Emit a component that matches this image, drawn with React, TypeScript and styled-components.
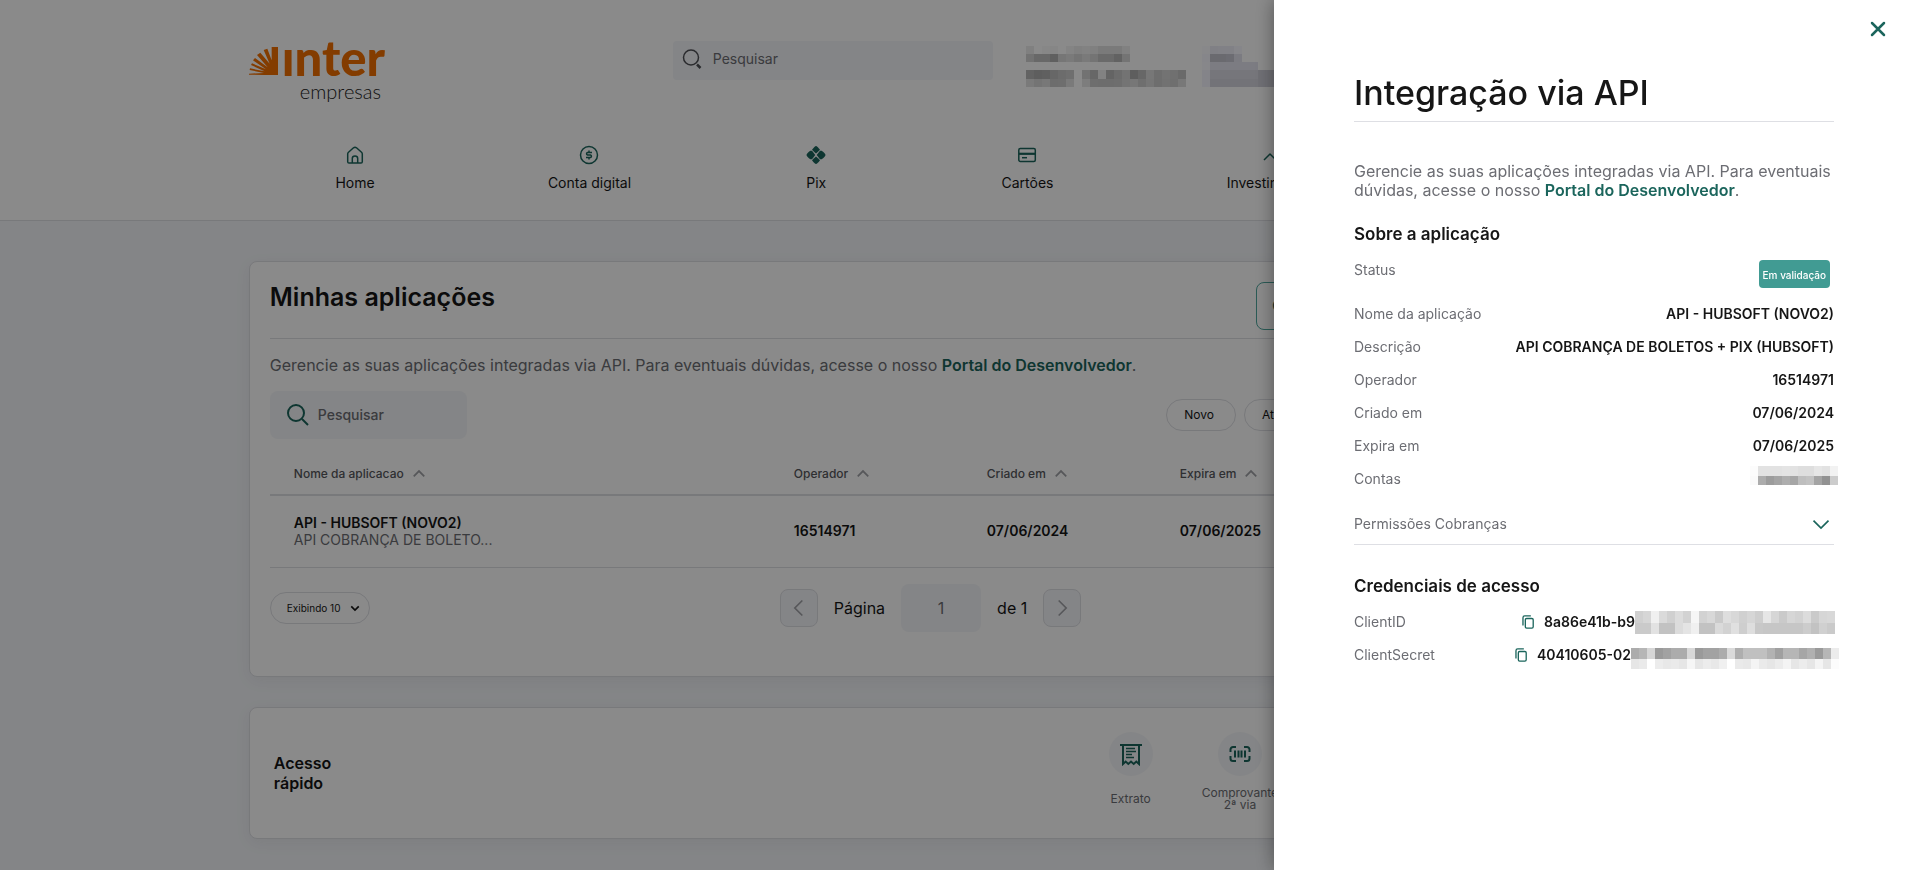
import React from "react";
import styled, { createGlobalStyle } from "styled-components";

const colors = {
  green: "#1b655c",
  text: "#161616",
  muted: "#6c6d73",
  line: "#dedfe4",
  field: "#f4f6f9",
};

const GlobalStyle = createGlobalStyle`
  * { box-sizing: border-box; }
  body {
    margin: 0;
    background: #f4f6f9;
    color: ${colors.text};
    font-family: Inter, "Liberation Sans", sans-serif;
    font-size: 14px;
    line-height: 20px;
    overflow: hidden;
  }
  button, input, select { font: inherit; color: inherit; }
  h1, h2, p, dl, dd { margin: 0; }
  a { text-decoration: none; }
`;

/* ---------- page shell ---------- */

const Page = styled.div`
  height: 100vh;
  overflow: hidden;
`;

const Container = styled.div`
  width: 74%;
  margin: 0 auto;
`;

const Header = styled.header`
  background: #fff;
  border-bottom: 1px solid ${colors.line};
  padding: 41px 0 27px;
`;

const TopRow = styled.div`
  display: flex;
  align-items: flex-start;
  height: 60px;
`;

const Brand = styled.a`
  display: grid;
  grid-template-columns: 29px auto;
  column-gap: 4px;
  width: 424px;
  justify-content: start;
  color: #f37000;
`;

const BrandMark = styled.svg`
  margin-top: 6px;
`;

const BrandName = styled.span`
  font-family: Lato, sans-serif;
  font-weight: 900;
  font-size: 49px;
  line-height: 32px;
`;

const BrandSub = styled.span`
  grid-column: 2;
  padding-left: 18px;
  font-family: Lato, sans-serif;
  font-weight: 300;
  font-size: 20px;
  line-height: 32px;
  color: #1a1a1a;
`;

const SearchBox = styled.label<{ $size: "top" | "table" }>`
  display: flex;
  align-items: center;
  background: ${colors.field};
  color: ${(p) => (p.$size === "top" ? "#4f5056" : colors.green)};
  border-radius: ${(p) => (p.$size === "top" ? 4 : 8)}px;
  width: ${(p) => (p.$size === "top" ? 320 : 197)}px;
  height: ${(p) => (p.$size === "top" ? 39 : 48)}px;
  padding: ${(p) => (p.$size === "top" ? "0 8px 4px" : "0 8px 0 16px")};
  gap: ${(p) => (p.$size === "top" ? 10 : 8)}px;

  svg { flex: none; }

  input {
    width: 100%;
    min-width: 0;
    border: 0;
    padding: 0;
    background: none;
    outline: none;
    font-weight: ${(p) => (p.$size === "top" ? 400 : 500)};
  }
  input::placeholder { color: ${colors.muted}; opacity: 1; }
`;

const Account = styled.div`
  display: flex;
  gap: 16px;
  margin: 5px 0 0 33px;
`;

const Nav = styled.nav`
  display: flex;
  justify-content: space-around;
  margin-top: 42px;
  padding-right: 260px;
`;

const NavLink = styled.a`
  display: flex;
  flex-direction: column;
  align-items: center;
  gap: 6px;
  color: ${colors.text};

  svg { color: ${colors.green}; }
`;

/* ---------- cards ---------- */

const Card = styled.section`
  background: #fff;
  border: 1px solid ${colors.line};
  border-radius: 8px;
  box-shadow: 0 4px 16px rgba(30, 40, 60, 0.06);
`;

const AppsCard = styled(Card)`
  margin-top: 40px;
  padding: 20px 20px 44px;
`;

const CardHead = styled.div`
  display: flex;
  justify-content: space-between;
  height: 57px;
  border-bottom: 1px solid ${colors.line};
`;

const CardTitle = styled.h2`
  font-size: 25px;
  line-height: 30px;
  font-weight: 600;
`;

const OutlineButton = styled.button`
  width: 388px;
  height: 48px;
  padding: 0 15px;
  text-align: left;
  border: 1px solid #4fa79e;
  border-radius: 8px;
  background: #fff;
  color: ${colors.green};
  font-weight: 600;
`;

const Intro = styled.p`
  margin-top: 16px;
  font-size: 16px;
  color: ${colors.muted};
`;

const PortalLink = styled.a`
  color: ${colors.green};
  font-weight: 600;
`;

const Filters = styled.div`
  display: flex;
  align-items: center;
  justify-content: space-between;
  margin-top: 16px;
`;

const Pills = styled.div`
  display: flex;
  gap: 8px;
  width: 478px;
`;

const Pill = styled.button`
  height: 32px;
  padding: 0 21px 0 17px;
  border: 1px solid ${colors.line};
  border-radius: 16px;
  background: #fff;
  font-size: 12px;
`;

const Table = styled.table`
  width: 100%;
  margin-top: 14px;
  border-collapse: collapse;
  table-layout: fixed;

  th, td {
    width: 193px;
    padding: 0;
    text-align: left;
  }
  th:first-child { width: 524px; }
  th:last-child { width: auto; }
  th:first-child, td:first-child { padding-left: 24px; }
  th {
    height: 42px;
    border-bottom: 2px solid ${colors.line};
    color: #56575c;
    font-size: 12px;
    font-weight: 500;
  }
  td {
    height: 72px;
    border-bottom: 1px solid ${colors.line};
    font-weight: 600;
  }
`;

const SortLabel = styled.span`
  display: flex;
  align-items: center;
  gap: 8px;

  svg { color: #a0a1a6; }
`;

const AppName = styled.div`
  line-height: 17px;
`;

const AppNote = styled.div`
  line-height: 17px;
  font-weight: 400;
  color: ${colors.muted};
`;

const TableFoot = styled.div`
  display: grid;
  grid-template-columns: 100px 1fr 153px;
  align-items: center;
  margin-top: 16px;
`;

const PageSize = styled.div`
  display: grid;
  align-items: center;

  select, svg { grid-area: 1 / 1; }
  select {
    appearance: none;
    height: 32px;
    padding: 0 16px;
    border: 1px solid ${colors.line};
    border-radius: 16px;
    background: #fff;
    font-size: 10px;
  }
  svg {
    justify-self: end;
    margin-right: 10px;
    pointer-events: none;
  }
`;

const Pager = styled.div`
  display: flex;
  align-items: center;
  justify-content: center;
  gap: 16px;
  font-size: 16px;

  input {
    width: 80px;
    height: 48px;
    border: 0;
    border-radius: 8px;
    background: ${colors.field};
    color: ${colors.muted};
    text-align: center;
  }
`;

const PagerButton = styled.button`
  display: grid;
  place-items: center;
  width: 38px;
  height: 38px;
  padding: 0;
  border: 1px solid ${colors.line};
  border-radius: 8px;
  background: ${colors.field};
  color: #a0a1a6;
`;

const QuickCard = styled(Card)`
  display: flex;
  align-items: center;
  justify-content: space-between;
  margin-top: 30px;
  padding: 24px 370px 27px 24px;
`;

const QuickTitle = styled.h2`
  width: 80px;
  padding-top: 4px;
  font-size: 16px;
  line-height: 20px;
  font-weight: 600;
`;

const QuickList = styled.div`
  display: flex;
`;

const QuickLink = styled.a`
  display: flex;
  flex-direction: column;
  align-items: center;
  width: 109px;
  color: ${colors.muted};
  font-size: 12px;
  line-height: 12px;
  text-align: center;
`;

const QuickIcon = styled.span`
  display: grid;
  place-items: center;
  width: 44px;
  height: 44px;
  border-radius: 50%;
  background: ${colors.field};
  color: ${colors.green};
`;

const QuickLabel = styled.span`
  display: grid;
  place-items: center;
  width: 76px;
  height: 24px;
  margin-top: 11px;
`;

/* ---------- drawer ---------- */

const Backdrop = styled.div`
  position: fixed;
  inset: 0;
  background: rgba(0, 0, 0, 0.46);
`;

const Drawer = styled.aside`
  position: fixed;
  inset: 0 0 0 auto;
  width: 640px;
  padding: 73px 80px 0;
  background: #fff;
  box-shadow: 0 0 18px rgba(0, 0, 0, 0.4);
`;

const CloseButton = styled.button`
  position: absolute;
  top: 17px;
  right: 24px;
  display: grid;
  place-items: center;
  width: 24px;
  height: 24px;
  padding: 0;
  border: 0;
  background: none;
  color: ${colors.green};
`;

const DrawerTitle = styled.h1`
  padding-bottom: 8px;
  border-bottom: 1px solid ${colors.line};
  font-size: 34px;
  line-height: 40px;
  font-weight: 500;
`;

const DrawerIntro = styled.p`
  margin-top: 40px;
  font-size: 16px;
  line-height: 19px;
  color: ${colors.muted};
`;

const SectionTitle = styled.h2`
  font-size: 17px;
  line-height: 20px;
  font-weight: 600;
`;

const Details = styled.dl`
  display: flex;
  flex-direction: column;
  gap: 13px;
`;

const Detail = styled.div<{ $tall?: boolean }>`
  display: flex;
  justify-content: space-between;
  height: ${(p) => (p.$tall ? 31 : 20)}px;

  dt { color: ${colors.muted}; }
  dd {
    display: flex;
    align-items: center;
    font-weight: 600;
  }
`;

const Badge = styled.span`
  align-self: flex-start;
  margin-right: 4px;
  padding: 5px 4px 3px;
  border-radius: 4px;
  background: #419b93;
  color: #fff;
  font-size: 10px;
  font-weight: 500;
`;

const Permissions = styled.button`
  display: flex;
  align-items: center;
  justify-content: space-between;
  width: 100%;
  height: 41px;
  margin-top: 15px;
  padding: 0 3px 0 0;
  border: 0;
  border-bottom: 1px solid ${colors.line};
  background: none;
  color: ${colors.muted};

  svg { color: ${colors.green}; }
`;

const CopyButton = styled.button`
  display: grid;
  place-items: center;
  width: 16px;
  height: 16px;
  margin-right: 8px;
  padding: 0;
  border: 0;
  background: none;
  color: ${colors.green};
`;

const Mosaic = styled.svg<{ $overhang?: number }>`
  flex: none;
  display: block;
  margin-right: ${(p) => -(p.$overhang ?? 0)}px;
`;

/* ---------- redacted values ---------- */

type Row = { height: number; shades: number[] };

// Each shade is a grey level (0–255); 255 leaves the cell empty.
function Redacted({ rows, overhang, tint = 0 }: { rows: Row[]; overhang?: number; tint?: number }) {
  const cell = 8;
  const width = Math.max(...rows.map((r) => r.shades.length)) * cell;
  const height = rows.reduce((sum, r) => sum + r.height, 0);
  let y = 0;
  return (
    <Mosaic width={width} height={height} shapeRendering="crispEdges" $overhang={overhang} aria-hidden>
      {rows.map((row, i) => {
        const top = y;
        y += row.height;
        return row.shades.map((s, j) =>
          s === 255 ? null : (
            <rect
              key={`${i}-${j}`}
              x={j * cell}
              y={top}
              width={cell}
              height={row.height}
              fill={`rgb(${s},${s},${Math.min(255, s + tint)})`}
            />
          )
        );
      })}
    </Mosaic>
  );
}

const accountRows: Row[] = [
  { height: 8, shades: [236, 255, 250, 248, 255, 244, 236, 240, 236, 226, 226, 226, 238] },
  { height: 8, shades: [210, 192, 192, 178, 218, 226, 214, 226, 214, 196, 196, 182, 214] },
  { height: 8, shades: [] },
  { height: 9, shades: [184, 174, 178, 190, 200, 206, 255, 210, 190, 240, 186, 200, 212, 174, 190, 220, 204, 212, 208, 196] },
  { height: 8, shades: [226, 214, 222, 202, 204, 226, 255, 232, 204, 202, 202, 204, 214, 220, 206, 218, 204, 210, 206, 222] },
];
const agencyRows: Row[] = [
  { height: 8, shades: [252, 236, 238, 238, 248] },
  { height: 8, shades: [248, 196, 196, 200, 228] },
  { height: 8, shades: [250, 230, 230, 230, 230, 230, 230, 255, 255] },
  { height: 9, shades: [244, 218, 218, 218, 218, 218, 218, 206, 206] },
  { height: 8, shades: [244, 212, 212, 212, 212, 212, 212, 206, 206] },
];
const contasRows: Row[] = [
  { height: 10, shades: [252, 226, 226, 226, 228, 226, 222, 222, 230, 226, 242] },
  { height: 9, shades: [250, 172, 156, 164, 174, 166, 190, 194, 164, 146, 204] },
  { height: 7, shades: [] },
];
const clientIdRows: Row[] = [
  { height: 12, shades: [208, 214, 240, 218, 208, 220, 210, 246, 210, 216, 202, 222, 216, 208, 214, 206, 230, 214, 202, 214, 210, 220, 202, 214, 216] },
  { height: 11, shades: [202, 202, 226, 194, 194, 220, 228, 240, 194, 194, 218, 210, 224, 206, 222, 200, 198, 198, 198, 198, 198, 204, 194, 208, 202] },
];
const secretRows: Row[] = [
  { height: 6, shades: [] },
  { height: 11, shades: [172, 182, 214, 154, 162, 172, 172, 216, 154, 162, 162, 172, 218, 174, 192, 192, 192, 178, 160, 182, 182, 166, 176, 154, 182, 236] },
  { height: 10, shades: [230, 234, 255, 236, 232, 234, 230, 246, 230, 236, 232, 240, 255, 234, 232, 244, 234, 230, 236, 244, 230, 236, 230, 244, 230, 252] },
];

/* ---------- icons ---------- */

const Magnifier = ({ size }: { size: number }) => (
  <svg width={size} height={size} viewBox="0 0 24 24" fill="none" stroke="currentColor" strokeWidth="2">
    <circle cx="10" cy="10" r="8" />
    <path d="M16 16l6 6" />
  </svg>
);

const SplitMagnifier = () => (
  <svg width="22" height="22" viewBox="0 0 22 22" fill="none" stroke="currentColor" strokeWidth="1.5">
    <circle cx="10" cy="9.5" r="7.5" />
    <path d="M16 16.5l3.500 3.500" strokeWidth="2.500" />
  </svg>
);

const Chevron = ({ dir, size, weight = 2 }: { dir: "up" | "down" | "left" | "right"; size: number; weight?: number }) => {
  const d = { up: "M3 16l9-9 9 9", down: "M3 8l9 9 9-9", left: "M16 3l-9 9 9 9", right: "M8 3l9 9-9 9" }[dir];
  return (
    <svg width={size} height={size} viewBox="0 0 24 24" fill="none" stroke="currentColor" strokeWidth={weight}>
      <path d={d} />
    </svg>
  );
};

const NavSvg = ({ children }: { children: React.ReactNode }) => (
  <svg width="24" height="24" viewBox="0 0 24 24" fill="none" stroke="currentColor" strokeWidth="1.5" strokeLinejoin="round">
    {children}
  </svg>
);

const HomeIcon = () => (
  <NavSvg>
    <path d="M6 20Q4.700 20 4.700 18.700V11Q4.700 10 5.500 9.200L10.500 4.800Q12 3.600 13.500 4.800L18.500 9.200Q19.300 10 19.300 11V18.700Q19.300 20 18 20Z" />
    <path d="M9.300 20v-4.500q0-2.500 2.700-2.500t2.700 2.500v4.500" />
  </NavSvg>
);

const DollarIcon = () => (
  <NavSvg>
    <circle cx="12" cy="12" r="8.500" />
    <path d="M15 9.500H10.500a1.300 1.300 0 0 0 0 2.500h3a1.300 1.300 0 0 1 0 2.500H9M12 7.500v2M12 14.500v2" />
  </NavSvg>
);

const PixIcon = () => (
  <NavSvg>
    <g fill="currentColor" stroke="none">
      <path d="M12 3q1.200 0 4 3.800Q14 9 12 10.500 10 9 8 6.800 10.800 3 12 3Z" />
      <path d="M12 21q1.200 0 4-3.800Q14 15 12 13.500 10 15 8 17.200 10.800 21 12 21Z" />
      <path d="M2.500 12q0-1.400 3.800-4.200h1.700L11.300 12 8 16.200H6.300Q2.500 13.400 2.500 12Z" />
      <path d="M21.500 12q0-1.400-3.800-4.200h-1.700L12.700 12l3.300 4.200h1.700Q21.500 13.400 21.500 12Z" />
    </g>
  </NavSvg>
);

const CardIcon = () => (
  <NavSvg>
    <rect x="3.800" y="5.500" width="16.500" height="13" rx="1.500" />
    <path d="M4 10.800h16" strokeWidth="2.200" />
    <path d="M7 14.700h5" />
  </NavSvg>
);

const TrendIcon = () => (
  <NavSvg>
    <path d="M3 17l6-6 4 4 8-9" />
  </NavSvg>
);

const ReceiptIcon = () => (
  <svg width="24" height="24" viewBox="0 0 24 24" fill="none" stroke="currentColor" strokeWidth="2">
    <path d="M1 3h22M4 3v19l2.700-2.500L9.300 22 12 19.500l2.700 2.500 2.600-2.500L20 22V3" />
    <path d="M7 6.500h9M7 9.500h10M7 12.500h6M7 15.500h8" strokeWidth="1.700" />
  </svg>
);

const BarcodeIcon = () => (
  <svg width="24" height="24" viewBox="0 0 24 24" fill="none" stroke="currentColor" strokeWidth="2">
    <path d="M8 5H5a2.500 2.500 0 0 0-2.500 2.500V10M16 5h3a2.500 2.500 0 0 1 2.500 2.500V10M8 19H5a2.500 2.500 0 0 1-2.500-2.500V14M16 19h3a2.500 2.500 0 0 0 2.500-2.500V14" />
    <path d="M7 8.500v7M10.500 8.500v7M13.500 8.500v7M17 8.500v7" />
  </svg>
);

const CopyIcon = () => (
  <svg width="12" height="14" viewBox="0 0 13.500 16" fill="none" stroke="currentColor" strokeWidth="1.500">
    <rect x="3.700" y="4" width="9" height="11" rx="1.500" />
    <path d="M1 12V3Q1 1 3 1h7" />
  </svg>
);

const Sunburst = () => (
  <BrandMark width="29" height="28" viewBox="0 0 87 84" fill="currentColor" aria-hidden>
    <path d="M68 0H87V84H45L0 83V80L45 78 2 69 3 64 47 73 6 54 9 49 51 67 12 40 18 33 56 61 24 24 34 17 62 50 44 9 55 5 68 40Z" />
  </BrandMark>
);

/* ---------- page ---------- */

const navItems = [
  { label: "Home", icon: <HomeIcon /> },
  { label: "Conta digital", icon: <DollarIcon /> },
  { label: "Pix", icon: <PixIcon /> },
  { label: "Cartões", icon: <CardIcon /> },
  { label: "Investimentos", icon: <TrendIcon /> },
];

const quickItems = [
  { label: "Extrato", icon: <ReceiptIcon /> },
  { label: "Comprovante 2ª via", icon: <BarcodeIcon /> },
];

const details = [
  ["Nome da aplicação", "API - HUBSOFT (NOVO2)"],
  ["Descrição", "API COBRANÇA DE BOLETOS + PIX (HUBSOFT)"],
  ["Operador", "16514971"],
  ["Criado em", "07/06/2024"],
  ["Expira em", "07/06/2025"],
];

const SectionBlock = styled.div<{ $top: number }>`
  display: flex;
  flex-direction: column;
  margin-top: ${(p) => p.$top}px;
  gap: 16px;
`;

const columns = ["Nome da aplicacao", "Operador", "Criado em", "Expira em"];

export default function App() {
  return (
    <Page>
      <GlobalStyle />
      <Header>
        <Container>
          <TopRow>
            <Brand href="#" aria-label="inter empresas">
              <Sunburst />
              <BrandName>ınter</BrandName>
              <BrandSub>empresas</BrandSub>
            </Brand>
            <SearchBox $size="top">
              <SplitMagnifier />
              <input type="search" placeholder="Pesquisar" aria-label="Pesquisar" />
            </SearchBox>
            <Account>
              <Redacted rows={accountRows} />
              <Redacted rows={agencyRows} tint={10} />
            </Account>
          </TopRow>
          <Nav>
            {navItems.map((item) => (
              <NavLink key={item.label} href="#">
                {item.icon}
                {item.label}
              </NavLink>
            ))}
          </Nav>
        </Container>
      </Header>

      <Container as="main">
        <AppsCard>
          <CardHead>
            <CardTitle>Minhas aplicações</CardTitle>
            <OutlineButton>Criar</OutlineButton>
          </CardHead>
          <Intro>
            Gerencie as suas aplicações integradas via API. Para eventuais dúvidas, acesse o nosso{" "}
            <PortalLink href="#">Portal do Desenvolvedor</PortalLink>.
          </Intro>
          <Filters>
            <SearchBox $size="table">
              <Magnifier size={24} />
              <input type="search" placeholder="Pesquisar" aria-label="Pesquisar aplicação" />
            </SearchBox>
            <Pills>
              <Pill>Novo</Pill>
              <Pill>Ativo</Pill>
            </Pills>
          </Filters>
          <Table>
            <thead>
              <tr>
                {columns.map((name) => (
                  <th key={name} scope="col">
                    <SortLabel>
                      {name}
                      <Chevron dir="up" size={14} weight={3} />
                    </SortLabel>
                  </th>
                ))}
              </tr>
            </thead>
            <tbody>
              <tr>
                <td>
                  <AppName>API - HUBSOFT (NOVO2)</AppName>
                  <AppNote>API COBRANÇA DE BOLETO...</AppNote>
                </td>
                <td>16514971</td>
                <td>07/06/2024</td>
                <td>07/06/2025</td>
              </tr>
            </tbody>
          </Table>
          <TableFoot>
            <PageSize>
              <select aria-label="Itens por página">
                <option>Exibindo 10</option>
              </select>
              <Chevron dir="down" size={10} weight={4} />
            </PageSize>
            <Pager>
              <PagerButton aria-label="Página anterior">
                <Chevron dir="left" size={20} />
              </PagerButton>
              <label htmlFor="page">Página</label>
              <input id="page" defaultValue="1" />
              <span>de 1</span>
              <PagerButton aria-label="Próxima página">
                <Chevron dir="right" size={20} />
              </PagerButton>
            </Pager>
          </TableFoot>
        </AppsCard>

        <QuickCard>
          <QuickTitle>Acesso rápido</QuickTitle>
          <QuickList>
            {quickItems.map((item) => (
              <QuickLink key={item.label} href="#">
                <QuickIcon>{item.icon}</QuickIcon>
                <QuickLabel>{item.label}</QuickLabel>
              </QuickLink>
            ))}
          </QuickList>
        </QuickCard>
      </Container>

      <Backdrop />
      <Drawer role="dialog" aria-labelledby="drawer-title">
        <CloseButton aria-label="Fechar">
          <svg width="16" height="16" viewBox="0 0 16 16" fill="none" stroke="currentColor" strokeWidth="2.500" strokeLinecap="round">
            <path d="M2 2l12 12M14 2L2 14" />
          </svg>
        </CloseButton>
        <DrawerTitle id="drawer-title">Integração via API</DrawerTitle>
        <DrawerIntro>
          Gerencie as suas aplicações integradas via API. Para eventuais dúvidas, acesse o nosso{" "}
          <PortalLink href="#">Portal do Desenvolvedor</PortalLink>.
        </DrawerIntro>

        <SectionBlock $top={24}>
          <SectionTitle>Sobre a aplicação</SectionTitle>
          <Details>
            <Detail $tall>
              <dt>Status</dt>
              <dd>
                <Badge>Em validação</Badge>
              </dd>
            </Detail>
            {details.map(([label, value]) => (
              <Detail key={label}>
                <dt>{label}</dt>
                <dd>{value}</dd>
              </Detail>
            ))}
            <Detail>
              <dt>Contas</dt>
              <dd>
                <Redacted rows={contasRows} overhang={4} />
              </dd>
            </Detail>
          </Details>
        </SectionBlock>
        <Permissions aria-expanded={false}>
          Permissões Cobranças
          <Chevron dir="down" size={20} weight={2} />
        </Permissions>

        <SectionBlock $top={31}>
          <SectionTitle>Credenciais de acesso</SectionTitle>
          <Details>
            <Detail>
              <dt>ClientID</dt>
              <dd>
                <CopyButton aria-label="Copiar ClientID">
                  <CopyIcon />
                </CopyButton>
                8a86e41b-b9
                <Redacted rows={clientIdRows} overhang={1} />
              </dd>
            </Detail>
            <Detail>
              <dt>ClientSecret</dt>
              <dd>
                <CopyButton aria-label="Copiar ClientSecret">
                  <CopyIcon />
                </CopyButton>
                40410605-02
                <Redacted rows={secretRows} overhang={5} />
              </dd>
            </Detail>
          </Details>
        </SectionBlock>
      </Drawer>
    </Page>
  );
}
